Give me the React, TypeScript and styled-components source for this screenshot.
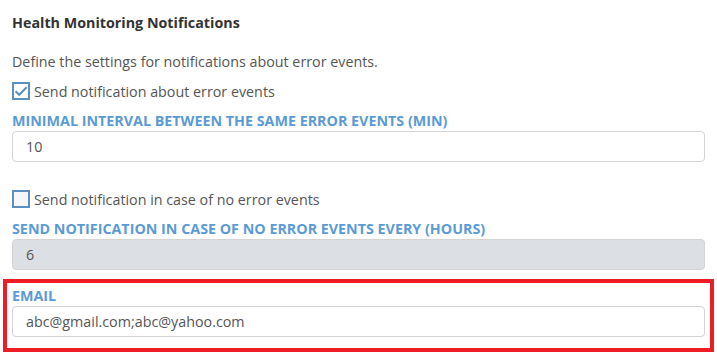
import React, { useState } from 'react';
import styled, { createGlobalStyle } from 'styled-components';

const GlobalStyle = createGlobalStyle`
  body {
    margin: 0;
    background: #fff;
    font-family: 'Open Sans', 'Liberation Sans', sans-serif;
  }
`;

const Page = styled.div`
  width: 717px;
  padding: 13px 12px 0 12px;
  box-sizing: border-box;
`;

const Title = styled.h3`
  margin: 0;
  font-size: 14.3px;
  line-height: 20px;
  font-weight: 700;
  color: #333;
`;

const Description = styled.p`
  margin: 19px 0 10px;
  font-size: 14.3px;
  line-height: 20px;
  color: #555;
`;

const CheckRow = styled.label<{ $top?: number }>`
  display: flex;
  align-items: center;
  gap: 4px;
  height: 18px;
  margin-top: ${(p) => p.$top ?? 0}px;
  font-size: 14.3px;
  color: #555;
  cursor: pointer;
`;

const Box = styled.span<{ $checked: boolean }>`
  width: 18px;
  height: 18px;
  box-sizing: border-box;
  border: 2px solid #5b8fc2;
  background: ${(p) => (p.$checked ? '#fff' : '#f4f6f8')};
  display: flex;
  align-items: center;
  justify-content: center;
  flex: none;
`;

const FieldLabel = styled.div`
  margin: 12px 0 1px;
  font-size: 14.3px;
  line-height: 18px;
  font-weight: 700;
  text-transform: uppercase;
  color: #5b9bd5;
`;

const Input = styled.input<{ $disabled?: boolean }>`
  display: block;
  width: 100%;
  height: 31px;
  box-sizing: border-box;
  border: 1px solid #d4d4d4;
  border-radius: 4px;
  padding: 0 13px;
  font-family: 'Open Sans', 'Liberation Sans', sans-serif;
  font-size: 14.3px;
  color: #555;
  background: ${(p) => (p.$disabled ? '#dce0e4' : '#fff')};
  outline: none;
`;

const Highlight = styled.div`
  margin: 9px -9px 0 -9px;
  border: 4px solid #ee1c25;
  padding: 0 5px 11px 5px;

  ${FieldLabel} {
    margin-top: 4px;
  }
`;

const Check = () => (
  <svg width="14" height="14" viewBox="0 0 14 14">
    <path d="M1.5 7.2 L5.2 10.8 L12.6 3.2" fill="none" stroke="#5b8fc2" strokeWidth="2" />
  </svg>
);

export default function App() {
  const [onError, setOnError] = useState(true);
  const [onNone, setOnNone] = useState(false);

  return (
    <Page>
      <GlobalStyle />
      <Title>Health Monitoring Notifications</Title>
      <Description>Define the settings for notifications about error events.</Description>
      <CheckRow onClick={() => setOnError(!onError)}>
        <Box $checked={onError}>{onError && <Check />}</Box>
        Send notification about error events
      </CheckRow>
      <FieldLabel>Minimal interval between the same error events (min)</FieldLabel>
      <Input defaultValue="10" />
      <CheckRow $top={28} onClick={() => setOnNone(!onNone)}>
        <Box $checked={onNone}>{onNone && <Check />}</Box>
        Send notification in case of no error events
      </CheckRow>
      <FieldLabel>Send notification in case of no error events every (hours)</FieldLabel>
      <Input $disabled disabled defaultValue="6" />
      <Highlight>
        <FieldLabel>Email</FieldLabel>
        <Input defaultValue="abc@gmail.com;abc@yahoo.com" />
      </Highlight>
    </Page>
  );
}
